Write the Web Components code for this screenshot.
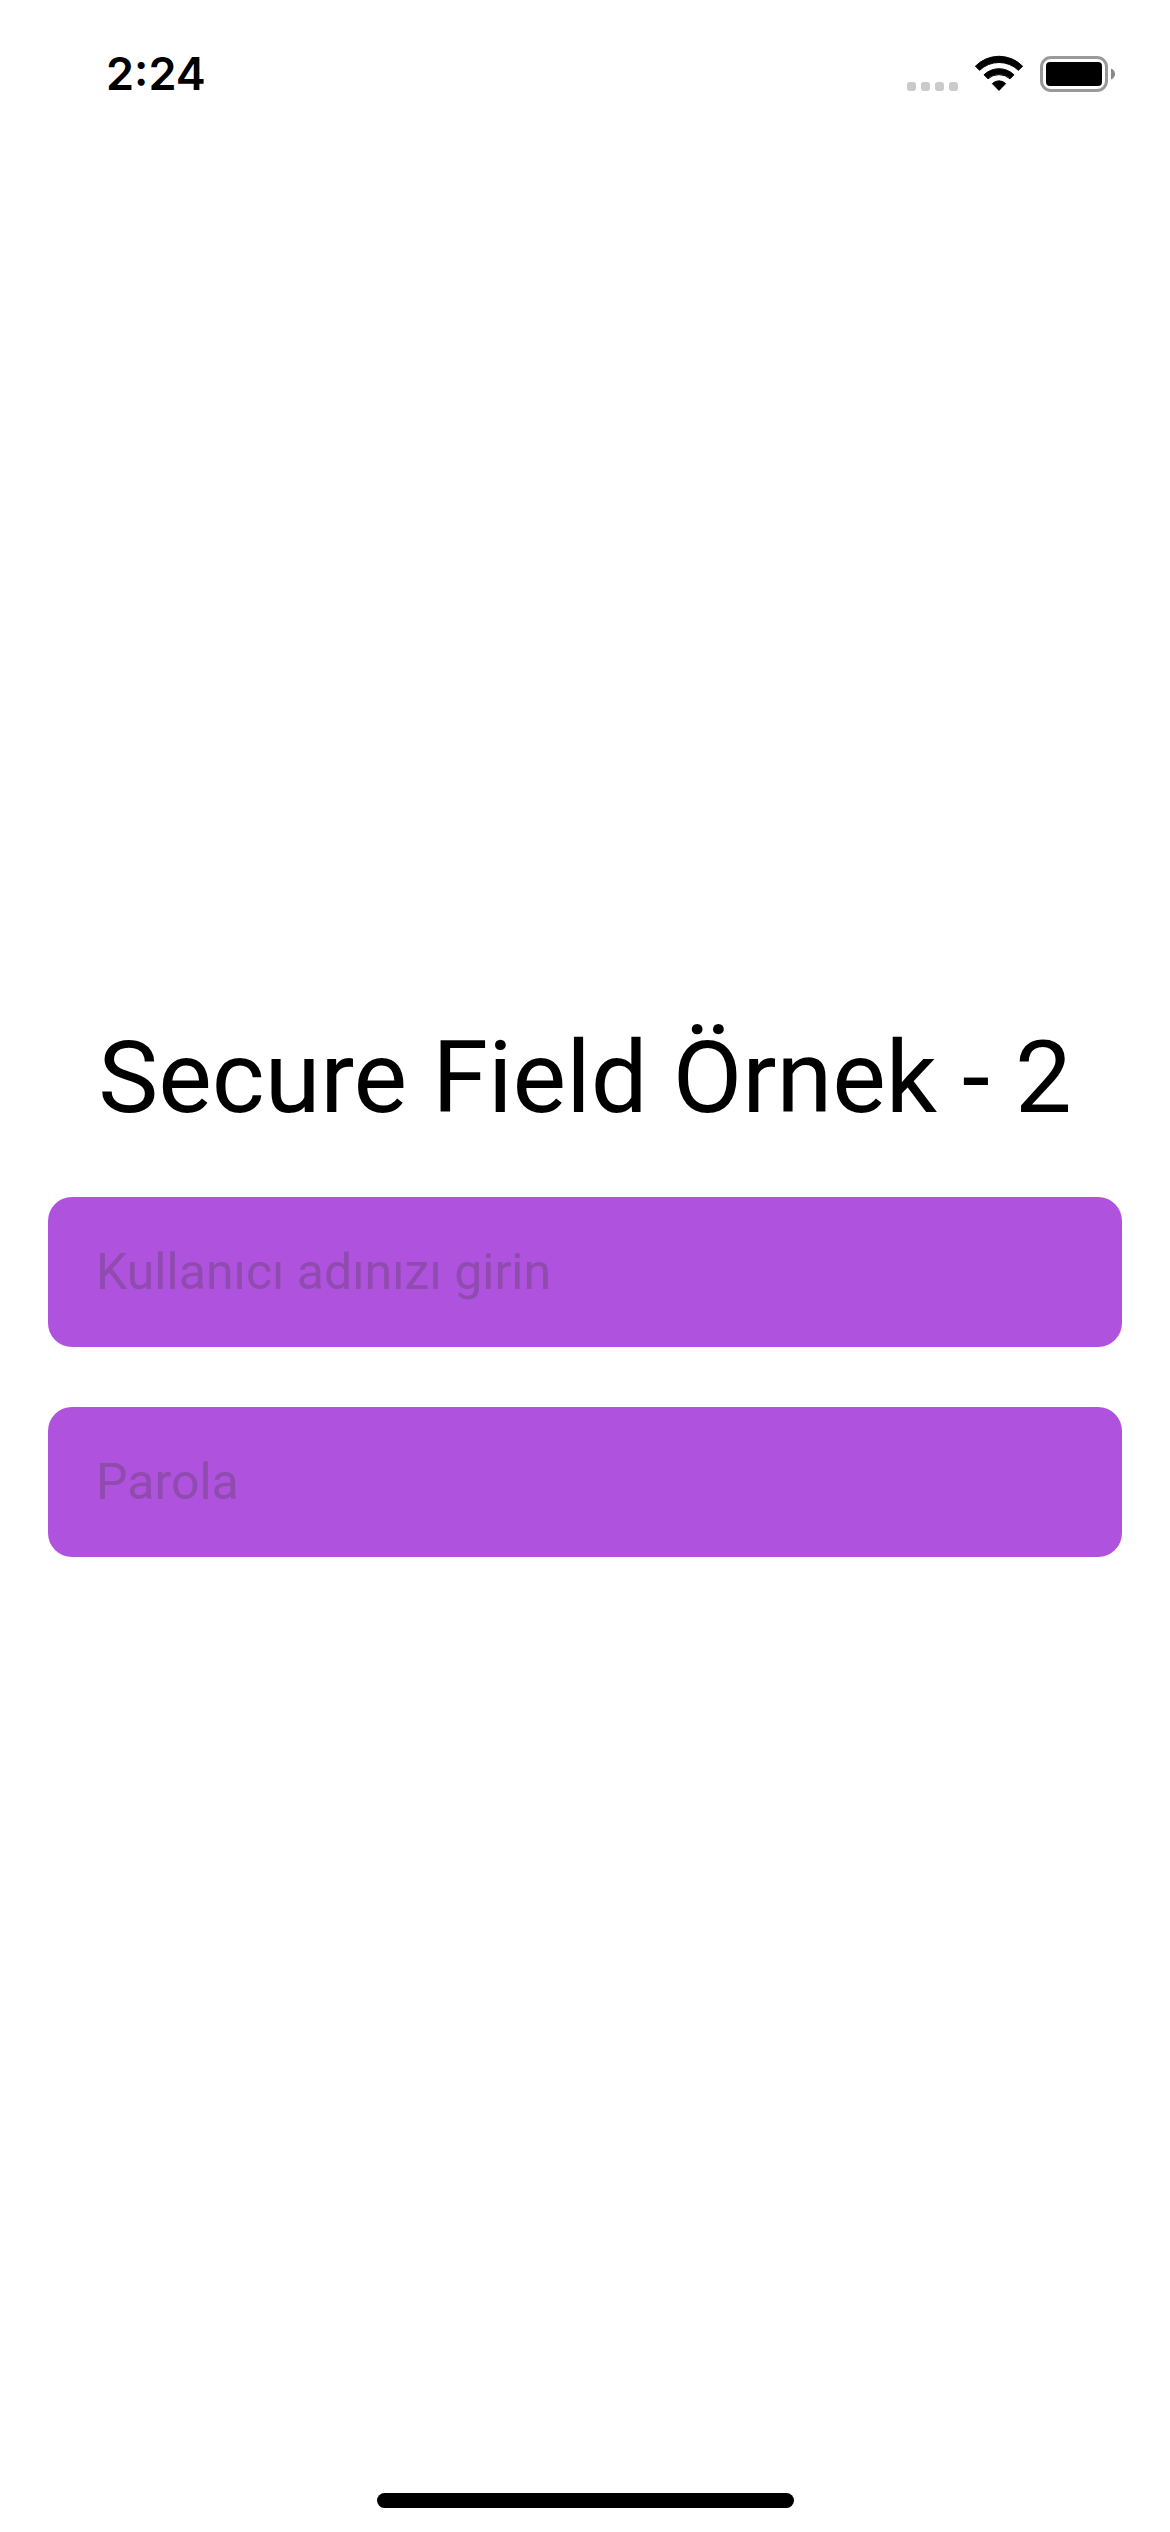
<!DOCTYPE html>
<html lang="tr">
<head>
<meta charset="utf-8">
<meta name="viewport" content="width=device-width, initial-scale=1">
<title>Secure Field Örnek - 2</title>
<style>
  body { margin: 0; background: #fff; color: #000; font-family: Roboto, "Liberation Sans", sans-serif; }
</style>
</head>
<body>
<app-screen>
  <status-bar slot="top">2:24</status-bar>
  <login-form>
    <span slot="title">Secure Field Örnek - 2</span>
    <form-field label="Kullanıcı adınızı girin" type="text" autofill="username"></form-field>
    <form-field label="Parola" type="password" autofill="current-password"></form-field>
  </login-form>
  <home-indicator slot="bottom"></home-indicator>
</app-screen>
<script>
  class BaseElement extends HTMLElement {
    connectedCallback() {
      if (this.shadowRoot) return;
      this.attachShadow({ mode: "open" }).innerHTML = this.render();
    }
  }

  customElements.define("status-bar", class extends BaseElement {
    render() {
      return `
        <style>
          :host { display: flex; justify-content: space-between; align-items: center; height: 36px; padding: 56px 55px 49px 106px; font-family: Inter, "Liberation Sans", sans-serif; }
          .time { font-size: 45px; line-height: 36px; font-weight: 600; }
          .icons { display: flex; align-items: center; gap: 17px; }
          svg { display: block; }
        </style>
        <span class="time"><slot></slot></span>
        <div class="icons">
          <svg width="51" height="36" viewBox="0 0 51 36" fill="#cacaca" aria-hidden="true">
            <rect y="26" width="9" height="9" rx="3"/><rect x="14" y="26" width="9" height="9" rx="3"/>
            <rect x="28" y="26" width="9" height="9" rx="3"/><rect x="42" y="26" width="9" height="9" rx="3"/>
          </svg>
          <svg width="48" height="36" viewBox="0 1 48 36" overflow="visible" stroke="#000" stroke-width="1" stroke-linejoin="round" aria-hidden="true">
            <path d="M.4 11.2A33 33 0 0 1 47.6 11.2L43.4 15.3A28 28 0 0 0 4.6 15.3Z"/>
            <path d="M9 19.8A21.5 21.5 0 0 1 39 19.8L35 23.8A16.5 16.5 0 0 0 13 23.8Z"/>
            <path d="M17.3 28.6A9.5 9.5 0 0 1 30.7 28.6L24 35.4Z"/>
          </svg>
          <svg width="75" height="36" viewBox="0 0 75 36" aria-hidden="true">
            <rect x="1.5" y="1.5" width="65" height="33" rx="9.5" fill="none" stroke="#999" stroke-width="3"/>
            <rect x="6" y="6" width="56" height="24" rx="4"/>
            <path d="M71 12.5C73.6 13.4 75 15.6 75 18S73.6 22.6 71 23.5Z" fill="#888"/>
          </svg>
        </div>`;
    }
  });

  customElements.define("form-field", class extends BaseElement {
    render() {
      const label = this.getAttribute("label");
      return `
        <style>
          :host { display: block; }
          input { display: block; box-sizing: border-box; width: 100%; height: 150px; margin: 0; padding: 0 48px;
            border: 0; border-radius: 24px; outline-offset: 4px; background: #af52de; color: #000;
            font: 400 50px/60px Roboto, "Liberation Sans", sans-serif; }
          input::placeholder { color: #8f4bae; opacity: 1; }
        </style>
        <input type="${this.getAttribute("type")}" placeholder="${label}" aria-label="${label}" autocomplete="${this.getAttribute("autofill")}">`;
    }
  });

  customElements.define("login-form", class extends BaseElement {
    render() {
      return `
        <style>
          :host { display: block; padding: 0 48px; }
          form { display: flex; flex-direction: column; gap: 56px; }
          h1 { margin: 0; font-size: 101px; line-height: 127px; font-weight: 400; text-align: center; }
          .fields { display: flex; flex-direction: column; gap: 60px; }
        </style>
        <form>
          <h1><slot name="title"></slot></h1>
          <div class="fields"><slot></slot></div>
        </form>`;
    }
  });

  customElements.define("home-indicator", class extends BaseElement {
    render() {
      return `
        <style>
          :host { display: flex; justify-content: center; padding: 63px 0 24px; }
          div { width: 417px; height: 15px; border-radius: 8px; background: #000; }
        </style>
        <div></div>`;
    }
  });

  customElements.define("app-screen", class extends BaseElement {
    render() {
      return `
        <style>
          :host { display: flex; flex-direction: column; min-height: 100vh; }
          main { flex: 1; display: flex; flex-direction: column; justify-content: center; }
        </style>
        <slot name="top"></slot>
        <main><slot></slot></main>
        <slot name="bottom"></slot>`;
    }
  });
</script>
</body>
</html>
